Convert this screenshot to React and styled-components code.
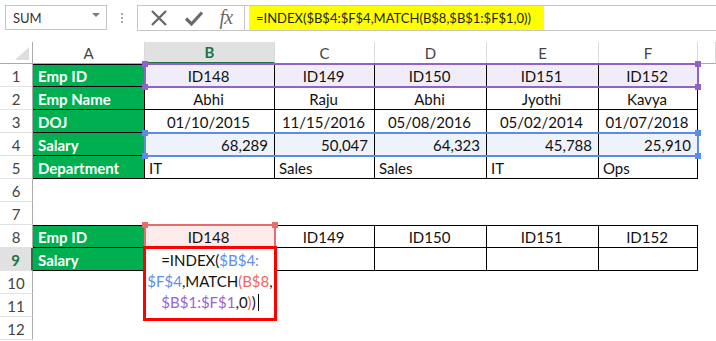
import React from "react";
import styled, { createGlobalStyle, css } from "styled-components";

const Global = createGlobalStyle`
  html, body { margin: 0; padding: 0; background: #fff; overflow: hidden; }
  body { font-family: Lato, "Liberation Sans", sans-serif; }
  * { box-sizing: border-box; }
`;

const Page = styled.div`
  width: 716px;
  height: 341px;
  background: #fff;
`;

/* ---------- toolbar ---------- */
const Toolbar = styled.div`
  display: flex;
  align-items: flex-start;
  height: 42px;
  padding: 5px 0 0 5px;
`;

const NameBox = styled.div`
  width: 102px;
  height: 25px;
  border: 1px solid #c6c6c6;
  display: flex;
  align-items: center;
  justify-content: space-between;
  padding: 0 6px 0 7px;
  font-size: 13px;
  color: #333;
`;

const Caret = styled.span`
  width: 0;
  height: 0;
  border-left: 4px solid transparent;
  border-right: 4px solid transparent;
  border-top: 4px solid #7a7a7a;
  margin-top: -6px;
`;

const Grip = styled.div`
  width: 30px;
  height: 26px;
  display: flex;
  flex-direction: column;
  align-items: center;
  justify-content: center;
  gap: 2px;
`;

const Dot = styled.span`
  width: 2px;
  height: 2px;
  background: #a6a6a6;
`;

const FxGroup = styled.div`
  width: 108px;
  height: 26px;
  border: 1px solid #c6c6c6;
  display: flex;
  align-items: center;
  justify-content: space-around;
  padding: 0 4px;
`;

const FxText = styled.span`
  font-family: "Liberation Serif", "DejaVu Serif", serif;
  font-style: italic;
  font-size: 20px;
  color: #6a6a6a;
  letter-spacing: -1px;
  margin-top: -2px;
`;

const FormulaBar = styled.div`
  flex: 1;
  height: 26px;
  border-top: 1px solid #c6c6c6;
  border-bottom: 1px solid #c6c6c6;
  padding-left: 4px;
  display: flex;
  align-items: stretch;
`;

const FormulaText = styled.div`
  width: 295px;
  background: #ffff00;
  font-size: 13px;
  color: #222;
  display: flex;
  align-items: center;
  padding-left: 7px;
  white-space: nowrap;
`;

/* ---------- sheet ---------- */
const Sheet = styled.div`
  position: relative;
  display: grid;
  grid-template-columns: 33px 112px 130px 100px 112px 112px 99px 18px;
  grid-template-rows: 22px repeat(12, 23px);
  font-size: 15px;
`;

const Corner = styled.div`
  position: relative;
  border-right: 1px solid #ababab;
  border-bottom: 1px solid #ababab;
`;

const CornerTri = styled.span`
  position: absolute;
  right: 3px;
  bottom: 3px;
  width: 0;
  height: 0;
  border-left: 14px solid transparent;
  border-bottom: 13px solid #dedede;
`;

const ColHead = styled.div`
  display: flex;
  align-items: center;
  justify-content: center;
  color: #444;
  border-right: 1px solid #dadada;
  border-bottom: 1px solid #ababab;
  ${(p) =>
    p.$active &&
    css`
      background: #e1e1e1;
      color: #217346;
      font-weight: 700;
      border-bottom: 2px solid #217346;
    `}
`;

const RowHead = styled.div`
  display: flex;
  align-items: center;
  justify-content: center;
  color: #444;
  border-right: 1px solid #ababab;
  border-bottom: 1px solid #e1e1e1;
  padding-top: 1px;
  ${(p) =>
    p.$active &&
    css`
      background: #e1e1e1;
      color: #217346;
      font-weight: 700;
      border-right: 2px solid #217346;
    `}
`;

const fills = {
  none: "transparent",
  green: "#00b050",
  purple: "#f1edf8",
  blue: "#eef2fb",
  pink: "#fcebeb",
};

const Cell = styled.div`
  display: flex;
  align-items: center;
  padding: 1px 6px 0 4px;
  white-space: nowrap;
  overflow: visible;
  color: #111;
  background: ${(p) => fills[p.$fill || "none"]};
  justify-content: ${(p) =>
    p.$align === "right" ? "flex-end" : p.$align === "center" ? "center" : "flex-start"};
  ${(p) =>
    p.$boxed &&
    css`
      border-right: 1px solid #000;
      border-bottom: 1px solid #000;
    `}
  ${(p) =>
    p.$top &&
    css`
      box-shadow: inset 0 1px 0 #000;
    `}
  ${(p) =>
    p.$head &&
    css`
      color: #fff;
      font-weight: 700;
      padding-left: 5px;
    `}
`;

const Range = styled.div`
  position: absolute;
  border: 2px solid ${(p) => p.$color};
  pointer-events: none;
`;

const Handle = styled.span`
  position: absolute;
  width: 6px;
  height: 6px;
  background: ${(p) => p.$color};
  ${(p) => (p.$v === "t" ? "top: -4px;" : "bottom: -4px;")}
  ${(p) => (p.$h === "l" ? "left: -4px;" : "right: -4px;")}
`;

const Editor = styled.div`
  position: absolute;
  left: 143px;
  top: 204px;
  width: 134px;
  height: 75px;
  border: 3px solid #ff0000;
  background: #fff;
  padding-top: 1px;
  font-size: 15px;
  line-height: 21px;
  text-align: center;
  color: #111;
  white-space: nowrap;
`;

const EditLine = styled.div`
  display: flex;
  justify-content: center;
`;

const Ref = styled.span`
  color: ${(p) => p.$c};
`;

const Caret2 = styled.span`
  display: inline-block;
  width: 1px;
  height: 17px;
  background: #000;
  margin: 2px 0 0 2px;
`;

const C = { blue: "#5f8ee8", red: "#ea6a62", purple: "#9a66cc" };

const cols = ["A", "B", "C", "D", "E", "F", ""];

const table = [
  { head: "Emp ID", vals: ["ID148", "ID149", "ID150", "ID151", "ID152"], align: "center", fill: "purple", top: true },
  { head: "Emp Name", vals: ["Abhi", "Raju", "Abhi", "Jyothi", "Kavya"], align: "center" },
  { head: "DOJ", vals: ["01/10/2015", "11/15/2016", "05/08/2016", "05/02/2014", "01/07/2018"], align: "center" },
  { head: "Salary", vals: ["68,289", "50,047", "64,323", "45,788", "25,910"], align: "right", fill: "blue" },
  { head: "Department", vals: ["IT", "Sales", "Sales", "IT", "Ops"], align: "left" },
  null,
  null,
  { head: "Emp ID", vals: ["ID148", "ID149", "ID150", "ID151", "ID152"], align: "center", top: true, firstFill: "pink" },
  { head: "Salary", vals: ["", "", "", "", ""], align: "center" },
  null,
  null,
  null,
];

function Handles({ color, bottom = true }) {
  return (
    <>
      <Handle $color={color} $v="t" $h="l" />
      <Handle $color={color} $v="t" $h="r" />
      {bottom && <Handle $color={color} $v="b" $h="l" />}
      {bottom && <Handle $color={color} $v="b" $h="r" />}
    </>
  );
}

export default function App() {
  return (
    <Page>
      <Global />
      <Toolbar>
        <NameBox>
          <span>SUM</span>
          <Caret />
        </NameBox>
        <Grip>
          <Dot />
          <Dot />
          <Dot />
        </Grip>
        <FxGroup>
          <svg width="18" height="18" viewBox="0 0 18 18">
            <path d="M2 2 L16 16 M16 2 L2 16" stroke="#6a6a6a" strokeWidth="2.4" fill="none" />
          </svg>
          <svg width="20" height="18" viewBox="0 0 20 18">
            <path d="M2 9.5 L7.5 15 L18 3.5" stroke="#6a6a6a" strokeWidth="3.2" fill="none" strokeLinejoin="miter" />
          </svg>
          <FxText>fx</FxText>
        </FxGroup>
        <FormulaBar>
          <FormulaText>=INDEX($B$4:$F$4,MATCH(B$8,$B$1:$F$1,0))</FormulaText>
        </FormulaBar>
      </Toolbar>

      <Sheet>
        <Corner>
          <CornerTri />
        </Corner>
        {cols.map((c, i) => (
          <ColHead key={"h" + i} $active={c === "B"}>
            {c}
          </ColHead>
        ))}

        {table.map((row, r) => (
          <React.Fragment key={"r" + r}>
            <RowHead $active={r === 8}>{r + 1}</RowHead>
            {row ? (
              <>
                <Cell $boxed $head $fill="green" $top={row.top}>
                  {row.head}
                </Cell>
                {row.vals.map((v, j) => (
                  <Cell
                    key={j}
                    $boxed
                    $top={row.top}
                    $align={row.align}
                    $fill={j === 0 && row.firstFill ? row.firstFill : row.fill}
                  >
                    {v}
                  </Cell>
                ))}
                <Cell />
              </>
            ) : (
              cols.map((_, j) => <Cell key={j} />)
            )}
          </React.Fragment>
        ))}

        <Range $color="#9063c9" style={{ left: 144, top: 21, width: 555, height: 25 }}>
          <Handles color="#9063c9" />
        </Range>
        <Range $color="#5d8ce6" style={{ left: 144, top: 90, width: 555, height: 25 }}>
          <Handles color="#5d8ce6" />
        </Range>
        <Range $color="#e66d6d" style={{ left: 144, top: 182, width: 132, height: 25 }}>
          <Handles color="#e66d6d" bottom={false} />
        </Range>

        <Editor>
          <EditLine>
            =INDEX(<Ref $c={C.blue}>$B$4:</Ref>
          </EditLine>
          <EditLine>
            <Ref $c={C.blue}>$F$4</Ref>,MATCH<Ref $c={C.red}>(B$8</Ref>,
          </EditLine>
          <EditLine>
            <Ref $c={C.purple}>$B$1:$F$1</Ref>,0<Ref $c={C.red}>)</Ref>)
            <Caret2 />
          </EditLine>
        </Editor>
      </Sheet>
    </Page>
  );
}
